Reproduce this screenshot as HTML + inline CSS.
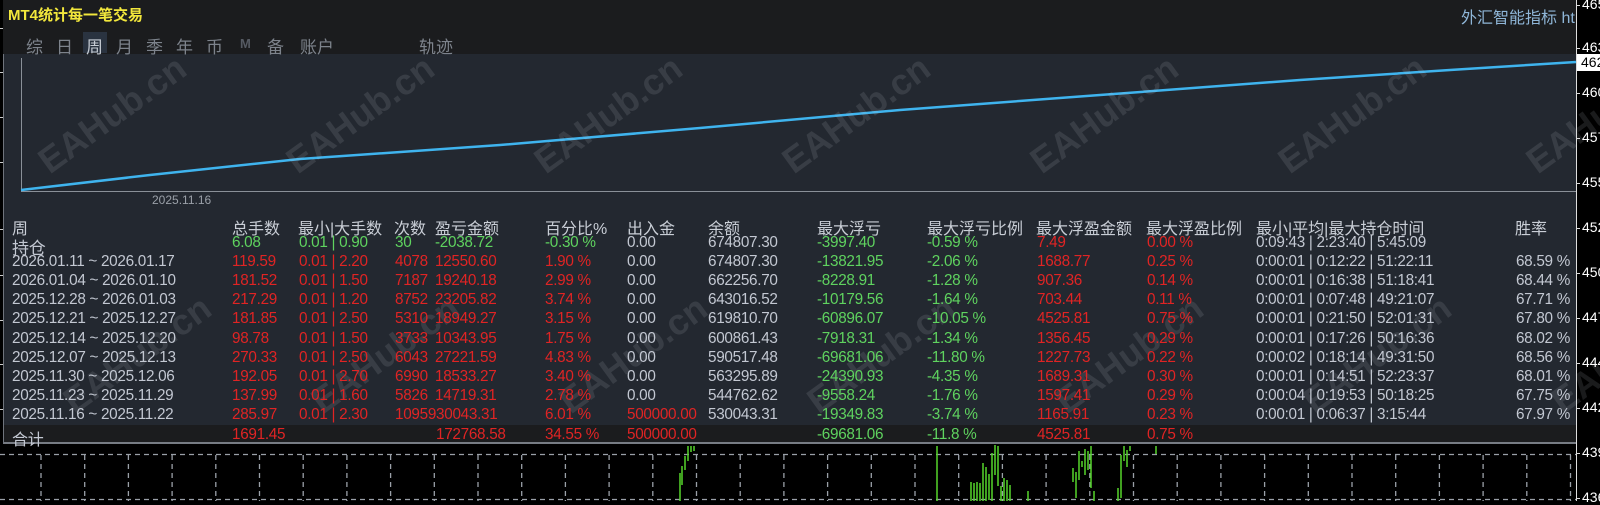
<!DOCTYPE html>
<html><head><meta charset="utf-8">
<style>
*{margin:0;padding:0;box-sizing:border-box}
body{width:1600px;height:501px;background:#000;position:relative;overflow:hidden;font-family:"Liberation Sans","Noto Sans CJK SC",sans-serif}
.a{position:absolute;white-space:nowrap}
#top{position:absolute;left:3px;top:0;width:1573px;height:54px;background:#1b1c1e}
#main{position:absolute;left:3px;top:54px;width:1573px;height:390px;background:#232830;border-left:1px solid #6f747c}
#foot{position:absolute;left:3px;top:425px;width:1573px;height:19px;background:#1b1c1e;border-bottom:2px solid #777c84;border-left:1px solid #6f747c}
.t{font-size:17px;color:#7d838c;top:33px}
.h{font-size:16px;color:#c9ced6;top:215px}
.r{font-size:15.3px;letter-spacing:-0.3px}
.w{color:#c3c8d2}.g{color:#5fd35f}.d{color:#e02424}
.wm{position:absolute;font:bold 36px "Liberation Sans",sans-serif;color:rgba(200,205,215,0.13);transform:rotate(-36deg);transform-origin:left bottom;white-space:nowrap}
.ax{position:absolute;left:1582px;font-size:14px;color:#fff}
</style></head><body>
<div id="top"></div>
<div id="main"></div>
<div id="foot"></div>
<div class="a" style="left:8px;top:4px;font-size:15px;font-weight:bold;color:#f2e73c">MT4统计每一笔交易</div>
<div class="a" style="left:1461px;top:4px;font-size:16px;color:#8fb6d8">外汇智能指标 ht</div>
<div class="a" style="left:83px;top:32px;width:24px;height:21px;background:#2a3340"></div>
<div class="a t" style="left:26px">综</div><div class="a t" style="left:56px">日</div>
<div class="a t" style="left:86px;color:#c6ccd4">周</div><div class="a t" style="left:116px">月</div>
<div class="a t" style="left:146px">季</div><div class="a t" style="left:176px">年</div>
<div class="a t" style="left:206px">币</div><div class="a t" style="left:240px;font-size:13px;top:36px;font-weight:bold;color:#555a62">M</div>
<div class="a t" style="left:267px">备</div><div class="a t" style="left:300px">账户</div>
<div class="a t" style="left:419px">轨迹</div>
<svg class="a" style="left:0;top:0" width="1600" height="501">
<g stroke="#ccc" stroke-width="1"><line x1="0" y1="28.5" x2="3" y2="28.5"/><line x1="0" y1="72.5" x2="3" y2="72.5"/><line x1="0" y1="117.5" x2="3" y2="117.5"/><line x1="0" y1="162.5" x2="3" y2="162.5"/><line x1="0" y1="229.5" x2="3" y2="229.5"/><line x1="0" y1="275.5" x2="3" y2="275.5"/><line x1="0" y1="320.5" x2="3" y2="320.5"/><line x1="0" y1="364.5" x2="3" y2="364.5"/><line x1="0" y1="409.5" x2="3" y2="409.5"/></g>
<line x1="21.5" y1="58" x2="21.5" y2="191" stroke="#8a9098" stroke-width="1"/>
<line x1="21" y1="191.5" x2="1576" y2="191.5" stroke="#8a9098" stroke-width="1"/>
<polyline points="21,190 150,175 300,159 500,145 700,128 900,110 1100,95 1300,80 1450,70 1576,62" fill="none" stroke="#3fb4ee" stroke-width="2.5"/>
<line x1="1576.5" y1="0" x2="1576.5" y2="501" stroke="#ddd" stroke-width="1"/>
<g stroke="#9aa0a8" stroke-width="1.3" stroke-dasharray="5,4">
<line x1="0" y1="454.5" x2="1576" y2="454.5"/><line x1="0" y1="499.5" x2="1576" y2="499.5"/>
</g>
<g stroke="#9aa0a8" stroke-width="1.3" stroke-dasharray="5,4" id="vg"></g>
<g stroke="#55d62a" stroke-width="1.5">
<line x1="680" y1="501" x2="680" y2="473"/><line x1="682" y1="485" x2="682" y2="466"/><line x1="685" y1="470" x2="685" y2="456"/><line x1="688" y1="461" x2="688" y2="446"/><line x1="691" y1="452" x2="691" y2="446"/><line x1="694" y1="451" x2="694" y2="446"/>
<line x1="937" y1="446" x2="937" y2="501"/>
<line x1="971" y1="501" x2="971" y2="482"/><line x1="974" y1="501" x2="974" y2="483"/><line x1="977" y1="501" x2="977" y2="482"/><line x1="980" y1="501" x2="980" y2="483"/>
<line x1="983" y1="501" x2="983" y2="463"/><line x1="986" y1="501" x2="986" y2="467"/><line x1="989" y1="500" x2="989" y2="474"/><line x1="992" y1="501" x2="992" y2="453"/><line x1="995" y1="475" x2="995" y2="445"/><line x1="998" y1="486" x2="998" y2="446"/><line x1="1001" y1="501" x2="1001" y2="486"/><line x1="1004" y1="501" x2="1004" y2="478"/><line x1="1007" y1="501" x2="1007" y2="480"/><line x1="1010" y1="501" x2="1010" y2="485"/>
<line x1="1028" y1="501" x2="1028" y2="491"/>
<line x1="1073" y1="482" x2="1073" y2="468"/><line x1="1076" y1="498" x2="1076" y2="472"/><line x1="1079" y1="480" x2="1079" y2="451"/><line x1="1082" y1="467" x2="1082" y2="461"/><line x1="1085" y1="475" x2="1085" y2="449"/><line x1="1088" y1="470" x2="1088" y2="451"/><line x1="1091" y1="488" x2="1091" y2="446"/><line x1="1094" y1="501" x2="1094" y2="491"/>
<line x1="1118" y1="501" x2="1118" y2="488"/><line x1="1121" y1="498" x2="1121" y2="455"/><line x1="1124" y1="461" x2="1124" y2="446"/><line x1="1127" y1="467" x2="1127" y2="450"/><line x1="1130" y1="451" x2="1130" y2="446"/>
<line x1="1156" y1="454" x2="1156" y2="446"/>
</g>
</svg>
<div class="a" style="left:152px;top:193px;font-size:12px;color:#9aa0a8">2025.11.16</div>
<div class="wm" style="left:55px;top:140px">EAHub.cn</div>
<div class="wm" style="left:303px;top:140px">EAHub.cn</div>
<div class="wm" style="left:551px;top:140px">EAHub.cn</div>
<div class="wm" style="left:799px;top:140px">EAHub.cn</div>
<div class="wm" style="left:1047px;top:140px">EAHub.cn</div>
<div class="wm" style="left:1295px;top:140px">EAHub.cn</div>
<div class="wm" style="left:1543px;top:140px">EAHub.cn</div>
<div class="wm" style="left:80px;top:380px">EAHub.cn</div>
<div class="wm" style="left:328px;top:380px">EAHub.cn</div>
<div class="wm" style="left:576px;top:380px">EAHub.cn</div>
<div class="wm" style="left:824px;top:380px">EAHub.cn</div>
<div class="wm" style="left:1072px;top:380px">EAHub.cn</div>
<div class="wm" style="left:1320px;top:380px">EAHub.cn</div>
<div class="wm" style="left:1568px;top:380px">EAHub.cn</div>

<div class="a h" style="left:12px">周</div><div class="a h" style="left:232px">总手数</div>
<div class="a h" style="left:298px">最小|大手数</div><div class="a h" style="left:394px">次数</div>
<div class="a h" style="left:435px">盈亏金额</div><div class="a h" style="left:545px">百分比%</div>
<div class="a h" style="left:627px">出入金</div><div class="a h" style="left:708px">余额</div>
<div class="a h" style="left:817px">最大浮亏</div><div class="a h" style="left:927px">最大浮亏比例</div>
<div class="a h" style="left:1036px">最大浮盈金额</div><div class="a h" style="left:1146px">最大浮盈比例</div>
<div class="a h" style="left:1256px">最小|平均|最大持仓时间</div><div class="a h" style="left:1515px">胜率</div>
<div id="rows"></div>
<script>
var rows=[
["持仓","6.08","0.01 | 0.90","30","-2038.72","-0.30 %","0.00","674807.30","-3997.40","-0.59 %","7.49","0.00 %","0:09:43 | 2:23:40 | 5:45:09","",1],
["2026.01.11 ~ 2026.01.17","119.59","0.01 | 2.20","4078","12550.60","1.90 %","0.00","674807.30","-13821.95","-2.06 %","1688.77","0.25 %","0:00:01 | 0:12:22 | 51:22:11","68.59 %"],
["2026.01.04 ~ 2026.01.10","181.52","0.01 | 1.50","7187","19240.18","2.99 %","0.00","662256.70","-8228.91","-1.28 %","907.36","0.14 %","0:00:01 | 0:16:38 | 51:18:41","68.44 %"],
["2025.12.28 ~ 2026.01.03","217.29","0.01 | 1.20","8752","23205.82","3.74 %","0.00","643016.52","-10179.56","-1.64 %","703.44","0.11 %","0:00:01 | 0:07:48 | 49:21:07","67.71 %"],
["2025.12.21 ~ 2025.12.27","181.85","0.01 | 2.50","5310","18949.27","3.15 %","0.00","619810.70","-60896.07","-10.05 %","4525.81","0.75 %","0:00:01 | 0:21:50 | 52:01:31","67.80 %"],
["2025.12.14 ~ 2025.12.20","98.78","0.01 | 1.50","3733","10343.95","1.75 %","0.00","600861.43","-7918.31","-1.34 %","1356.45","0.29 %","0:00:01 | 0:17:26 | 50:16:36","68.02 %"],
["2025.12.07 ~ 2025.12.13","270.33","0.01 | 2.50","6043","27221.59","4.83 %","0.00","590517.48","-69681.06","-11.80 %","1227.73","0.22 %","0:00:02 | 0:18:14 | 49:31:50","68.56 %"],
["2025.11.30 ~ 2025.12.06","192.05","0.01 | 2.70","6990","18533.27","3.40 %","0.00","563295.89","-24390.93","-4.35 %","1689.31","0.30 %","0:00:01 | 0:14:51 | 52:23:37","68.01 %"],
["2025.11.23 ~ 2025.11.29","137.99","0.01 | 1.60","5826","14719.31","2.78 %","0.00","544762.62","-9558.24","-1.76 %","1597.41","0.29 %","0:00:04 | 0:19:53 | 50:18:25","67.75 %"],
["2025.11.16 ~ 2025.11.22","285.97","0.01 | 2.30","1095930043.31","","6.01 %","500000.00","530043.31","-19349.83","-3.74 %","1165.91","0.23 %","0:00:01 | 0:06:37 | 3:15:44","67.97 %",0,1]];
var xs=[12,232,299,395,435,545,627,708,817,927,1037,1147,1256];
var h="";
rows.forEach(function(r,i){
 var y=234+i*19.1, open=r[14]===1;
 var c=[ "w", open?"g":"d", open?"g":"d", open?"g":"d", open?"g":"d", open?"g":"d", r[15]?"d":"w","w","g","g","d","d","w"];
 for(var k=0;k<13;k++){ if(r[k]==="")continue;
  var fs=(k==0&&open)?"font-size:17px;":"";
  h+='<div class="a r '+c[k]+'" style="left:'+xs[k]+'px;top:'+y+'px;'+fs+'">'+r[k]+'</div>';}
 if(r[13])h+='<div class="a r w" style="right:30px;top:'+y+'px">'+r[13]+'</div>';
});
var f=[[12,"合计","w"],[232,"1691.45","d"],[436,"172768.58","d"],[545,"34.55 %","d"],[627,"500000.00","d"],[817,"-69681.06","g"],[927,"-11.8 %","g"],[1037,"4525.81","d"],[1147,"0.75 %","d"]];
f.forEach(function(e){h+='<div class="a r '+e[2]+'" style="left:'+e[0]+'px;top:426px;'+(e[1]=="合计"?"font-size:16px;":"")+'">'+e[1]+'</div>';});
var ax=[["4651",-4],["4632",39],["4606",84],["4579",129],["4553",174],["4526",219],["4500",264],["4473",309],["4447",354],["4420",399],["4394",444],["4367",489]];
ax.forEach(function(a){h+='<div class="ax" style="top:'+a[1]+'px">'+a[0]+'</div><div class="a" style="left:1576px;top:'+(a[1]+9)+'px;width:4px;height:1px;background:#ddd"></div>';});
h+='<div class="a" style="left:1577px;top:54px;width:23px;height:17px;background:#fff;color:#000;font-size:14px;padding-left:4px">4621</div>';
document.getElementById("rows").innerHTML=h;
var g="";for(var x=41;x<1576;x+=43.7){g+='<line x1="'+x.toFixed(1)+'" y1="455" x2="'+x.toFixed(1)+'" y2="501"/>';}
document.getElementById("vg").innerHTML=g;
</script>
</body></html>
